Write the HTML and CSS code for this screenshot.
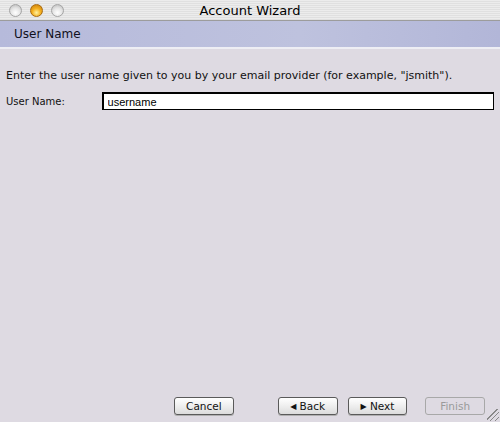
FILE: index.html
```html
<!DOCTYPE html>
<html lang="en">
<head>
    <meta charset="UTF-8">
    <meta name="viewport" content="width=device-width, initial-scale=1.0">
    <title>Account Wizard</title>
    <link rel="stylesheet" href="styles.css">
</head>
<body>
    <div class="window">
        <div class="titlebar">
            <div class="lights">
                <span class="light"></span>
                <span class="light light-min"></span>
                <span class="light"></span>
            </div>
            <div class="title">Account Wizard</div>
        </div>

        <div class="page-header">User Name</div>

        <div class="content">
            <p class="intro">Enter the user name given to you by your email provider (for example, "jsmith").</p>
            <div class="field-row">
                <label for="userName">User Name:</label>
                <input type="text" id="userName" value="username">
            </div>
        </div>

        <div class="footer">
            <button class="btn btn-cancel">Cancel</button>
            <button class="btn btn-back"><span class="arrow">&#9664;</span> Back</button>
            <button class="btn btn-next"><span class="arrow">&#9654;</span> Next</button>
            <button class="btn btn-finish" disabled>Finish</button>
            <span class="grip"></span>
        </div>
    </div>
</body>
</html>
```

FILE: styles.css
```css
html, body {
    margin: 0;
    padding: 0;
}
body {
    width: 500px;
    height: 422px;
    overflow: hidden;
    font-family: "DejaVu Sans", sans-serif;
    background: #dedae2;
}
.window {
    display: flex;
    flex-direction: column;
    height: 422px;
    position: relative;
}
.titlebar {
    height: 21px;
    display: flex;
    align-items: center;
    position: relative;
    background: repeating-linear-gradient(to bottom, #ececec 0, #ececec 1px, #e0e0e0 1px, #e0e0e0 2px);
    border-bottom: 1px solid #9c9c9c;
    box-sizing: border-box;
}
.lights {
    display: flex;
    gap: 8px;
    padding-left: 9px;
}
.light {
    width: 13px;
    height: 13px;
    border-radius: 50%;
    background: radial-gradient(circle at 50% 70%, #ffffff 0, #e4e4e4 50%, #b4b4b4 100%);
    border: 1px solid #a4a4a4;
    box-sizing: border-box;
}
.light-min {
    background: radial-gradient(circle at 50% 70%, #fff2a0 0, #f4b020 45%, #c47808 100%);
    border-color: #a86a10;
}
.title {
    position: absolute;
    left: 0;
    right: 0;
    text-align: center;
    font-size: 13px;
    color: #000;
    line-height: 21px;
}
.page-header {
    height: 26px;
    line-height: 26px;
    padding-left: 14px;
    font-size: 12px;
    color: #101020;
    background: linear-gradient(to right, #b6badb 0, #bec2de 60%, #b2b6d8 100%);
    border-bottom: 2px solid #eeeef4;
}
.content {
    flex: 1;
    padding: 20px 6px 0 6px;
    font-size: 10px;
    color: #111;
}
.intro {
    margin: 0 0 10px 0;
    font-size: 11px;
    line-height: 13px;
}
.field-row {
    display: flex;
    align-items: center;
}
.field-row label {
    width: 96px;
}
.field-row input {
    width: 394px;
    height: 18px;
    box-sizing: border-box;
    border: 2px solid #000;
    border-right-width: 1px;
    border-bottom-width: 1px;
    background: #fff;
    padding: 0 4px;
    font-family: "Liberation Sans", sans-serif;
    font-size: 11px;
    color: #000;
    outline: none;
}
.footer {
    display: flex;
    align-items: center;
    padding: 0 15px 7px 174px;
    position: relative;
}
.btn {
    width: 60px;
    height: 18px;
    padding: 0;
    font-family: "DejaVu Sans", sans-serif;
    font-size: 10.5px;
    color: #111;
    background: linear-gradient(to bottom, #ffffff 0, #f0f0f0 45%, #dcdcdc 100%);
    border: 1px solid #5a5a5a;
    border-radius: 3px;
    box-shadow: 0 1px 0 #b0b0b0;
}
.btn-back {
    margin-left: 44px;
}
.btn-next {
    margin-left: 10px;
}
.btn-finish {
    margin-left: 18px;
    color: #9a9a9a;
    background: transparent;
    border-color: #a8a8a8;
    box-shadow: none;
}
.arrow {
    font-size: 8px;
    vertical-align: 1px;
}
.grip {
    position: absolute;
    right: 1px;
    bottom: 1px;
    width: 12px;
    height: 12px;
    background: linear-gradient(135deg, transparent 0, transparent 40%, #888 40%, #888 46%, transparent 46%, transparent 60%, #888 60%, #888 66%, transparent 66%, transparent 80%, #888 80%, #888 86%, transparent 86%);
}
```
